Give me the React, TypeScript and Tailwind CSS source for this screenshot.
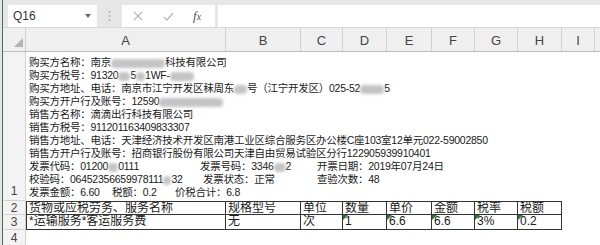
const font = { fontFamily: '"Liberation Sans", "Noto Sans CJK SC", sans-serif' };

const cols = [
  { k: "A", w: 200 },
  { k: "B", w: 75 },
  { k: "C", w: 42 },
  { k: "D", w: 44 },
  { k: "E", w: 45 },
  { k: "F", w: 43 },
  { k: "G", w: 43 },
  { k: "H", w: 44 },
  { k: "I", w: 33 },
];

function Blur({ w }: { w: number }) {
  return (
    <span
      className="inline-block h-[9px] bg-[#c4c4c4] blur-[1.5px] align-middle rounded-sm"
      style={{ width: w }}
    />
  );
}

function Tri() {
  return (
    <span className="absolute left-0 top-0 h-0 w-0 border-t-[5px] border-r-[5px] border-t-[#22743a] border-r-transparent" />
  );
}

export default function App() {
  const row2 = ["货物或应税劳务、服务名称", "规格型号", "单位", "数量", "单价", "金额", "税率", "税额"];
  const row3 = ["*运输服务*客运服务费", "无", "次", "1", "6.6", "6.6", "3%", "0.2"];

  return (
    <div
      className="flex h-[245px] w-[600px] overflow-hidden bg-white text-[#1a1a1a]"
      style={font}
    >
      <div className="w-[2px] bg-[#e4e4e4]" />
      <div className="w-[1px] bg-[#3f7552]" />
      <div className="flex flex-1 flex-col">
        {/* formula bar */}
        <div className="flex h-[28px] items-start border-b border-[#d6d6d6] bg-[#e7e7e7] pt-[5px]">
          <div className="ml-[5px] flex h-[22px] w-[89px] items-center justify-between bg-white pl-[5px] pr-[6px] text-[12px] text-[#333]">
            <span>Q16</span>
            <svg width="6" height="4" viewBox="0 0 6 4">
              <path d="M0 0 L6 0 L3 4 Z" fill="#666" />
            </svg>
          </div>
          <div className="flex h-[22px] w-[25px] items-center justify-center">
            <svg width="3" height="12" viewBox="0 0 3 12">
              <circle cx="1.5" cy="2" r="1" fill="#b0b0b0" />
              <circle cx="1.5" cy="6" r="1" fill="#b0b0b0" />
              <circle cx="1.5" cy="10" r="1" fill="#b0b0b0" />
            </svg>
          </div>
          <div className="flex h-[22px] w-[93px] items-center bg-white">
            <svg className="ml-[11px]" width="10" height="10" viewBox="0 0 10 10">
              <path d="M1 1 L9 9 M9 1 L1 9" stroke="#b8b8b8" strokeWidth="1.2" />
            </svg>
            <svg className="ml-[20px]" width="11" height="9" viewBox="0 0 11 9">
              <path d="M1 5 L4 8 L10 1" stroke="#b8b8b8" strokeWidth="1.2" fill="none" />
            </svg>
            <span
              className="ml-[19px] text-[13px] italic text-[#555]"
              style={{ fontFamily: '"Liberation Serif", serif' }}
            >
              f<span className="text-[10px]">x</span>
            </span>
          </div>
          <div className="ml-[3px] h-[22px] flex-1 bg-white" />
        </div>

        {/* column headers */}
        <div className="flex h-[24px] border-b border-[#bdbdbd] bg-[#efefef] text-[13px] text-[#444]">
          <div className="relative w-[23px] border-r border-[#d0d0d0]">
            <span className="absolute bottom-[4px] right-[2px] h-0 w-0 border-b-[9px] border-l-[9px] border-b-[#b4b4b4] border-l-transparent" />
          </div>
          {cols.map((c) => (
            <div
              key={c.k}
              className="flex items-center justify-center border-r border-[#d0d0d0] pt-[3px]"
              style={{ width: c.w }}
            >
              {c.k}
            </div>
          ))}
        </div>

        {/* row 1 */}
        <div className="flex h-[156px]">
          <div className="flex w-[23px] items-end justify-center border-r border-b border-[#d3d3d3] bg-[#f3f3f3] pb-[2px] text-[12px] leading-[13px] text-[#444]">
            1
          </div>
          <div className="flex flex-1 flex-col justify-end whitespace-nowrap pb-[2px] pl-[3px] text-[10.5px] leading-[13px] tracking-[-0.25px]">
            <div>
              购买方名称：南京<Blur w={54} />科技有限公司
            </div>
            <div>
              购买方税号：91320<Blur w={12} />5<Blur w={9} />1WF-<Blur w={24} />
            </div>
            <div>
              购买方地址、电话：南京市江宁开发区秣周东<Blur w={13} />号（江宁开发区）025-52<Blur w={24} />5
            </div>
            <div>
              购买方开户行及账号：12590<Blur w={64} />
            </div>
            <div>销售方名称：滴滴出行科技有限公司</div>
            <div>销售方税号：911201163409833307</div>
            <div>
              销售方地址、电话：天津经济技术开发区南港工业区综合服务区办公楼C座103室12单元022-59002850
            </div>
            <div>销售方开户行及账号：招商银行股份有限公司天津自由贸易试验区分行122905939910401</div>
            <div className="flex">
              <span className="w-[171px]">
                发票代码：01200<Blur w={10} />0111
              </span>
              <span className="w-[117px]">
                发票号码：3346<Blur w={12} />2
              </span>
              <span>开票日期：2019年07月24日</span>
            </div>
            <div className="flex">
              <span className="w-[174px]">
                校验码：06452356659978111<Blur w={8} />32
              </span>
              <span className="w-[114px]">发票状态：正常</span>
              <span>查验次数：48</span>
            </div>
            <div className="flex">
              <span className="w-[83px]">发票金额：6.60</span>
              <span className="w-[63px]">税额：0.2</span>
              <span>价税合计：6.8</span>
            </div>
          </div>
        </div>

        {/* row 2 */}
        <div className="flex h-[14px]">
          <div className="flex w-[23px] items-center justify-center border-r border-b border-[#d3d3d3] bg-[#f3f3f3] text-[12px] text-[#444]">
            2
          </div>
          {row2.map((t, i) => (
            <div
              key={i}
              className={`overflow-hidden whitespace-nowrap border-t border-r border-b border-[#333] pl-[2px] text-[12px] leading-[12px] ${i === 0 ? "border-l" : ""}`}
              style={{ width: cols[i].w }}
            >
              {t}
            </div>
          ))}
        </div>

        {/* row 3 */}
        <div className="flex h-[15px]">
          <div className="flex w-[23px] items-center justify-center border-r border-b border-[#d3d3d3] bg-[#f3f3f3] text-[12px] text-[#444]">
            3
          </div>
          {row3.map((t, i) => (
            <div
              key={i}
              className={`relative overflow-hidden whitespace-nowrap border-r border-b border-[#333] pl-[2px] text-[12px] leading-[13px] ${i === 0 ? "border-l" : ""}`}
              style={{ width: cols[i].w }}
            >
              {i >= 3 && <Tri />}
              {t}
            </div>
          ))}
        </div>

        {/* row 4 */}
        <div className="flex h-[15px]">
          <div className="flex w-[23px] items-center justify-center border-r border-[#d3d3d3] bg-[#f3f3f3] text-[12px] text-[#444]">
            4
          </div>
          <div className="flex-1" />
        </div>
      </div>
    </div>
  );
}
